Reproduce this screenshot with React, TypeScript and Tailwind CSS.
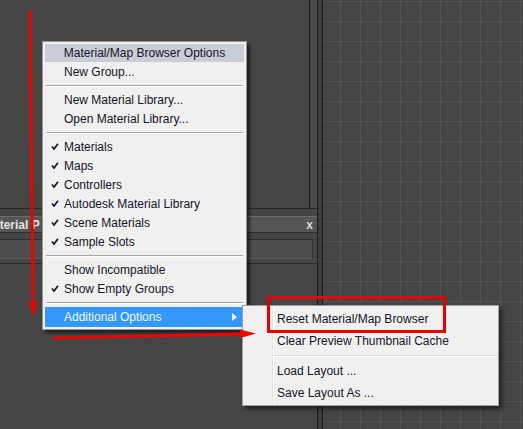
import React from 'react';

type Item = { label: string; checked?: boolean };

const groups: Item[][] = [
    [{ label: 'New Group...' }],
    [{ label: 'New Material Library...' }, { label: 'Open Material Library...' }],
    [
        { label: 'Materials', checked: true },
        { label: 'Maps', checked: true },
        { label: 'Controllers', checked: true },
        { label: 'Autodesk Material Library', checked: true },
        { label: 'Scene Materials', checked: true },
        { label: 'Sample Slots', checked: true },
    ],
    [{ label: 'Show Incompatible' }, { label: 'Show Empty Groups', checked: true }],
];

function Check() {
    return (
        <svg width="8" height="7" viewBox="0 0 8 7" className="text-[#1a1a30]">
            <path d="M1 3.5 L3 6 L7 0.8" fill="none" stroke="currentColor" strokeWidth={1.8} />
        </svg>
    );
}

function Separator() {
    return (
        <div className="h-[9px] flex items-center px-[1px]">
            <div className="w-full h-[2px] border-t border-[#a6a6a6] border-b border-b-white" />
        </div>
    );
}

function MainMenu() {
    return (
        <div className="absolute left-[42px] top-[41px] w-[205px] bg-[#f0f0f0] border border-[#979797] p-[2px] shadow-[3px_3px_3px_rgba(0,0,0,0.55)] text-[12px] text-[#141428]">
            <div className="h-[18px] bg-[#c9cdd5] flex items-center justify-center">Material/Map Browser Options</div>
            {groups.map((g, gi) => (
                <div key={gi}>
                    {gi > 0 && <Separator />}
                    {g.map((it) => (
                        <div key={it.label} className="h-[19px] flex items-center">
                            <div className="w-[19px] flex items-center justify-center pl-[1px]">{it.checked && <Check />}</div>
                            <span>{it.label}</span>
                        </div>
                    ))}
                </div>
            ))}
            <Separator />
            <div className="h-[20px] bg-[#3399ff] text-[#f4f8ff] flex items-center">
                <div className="w-[19px]" />
                <span className="flex-1">Additional Options</span>
                <svg width="5" height="8" viewBox="0 0 5 8" className="mr-[7px]">
                    <path d="M0 0 L5 4 L0 8 Z" fill="white" />
                </svg>
            </div>
        </div>
    );
}

function SubMenu() {
    const row = 'h-[22px] flex items-center pl-[34px]';
    return (
        <div className="absolute left-[242px] top-[305px] w-[257px] h-[101px] bg-[#f0f0f0] border border-[#a0a0a0] pt-[2px] shadow-[3px_3px_4px_rgba(0,0,0,0.55)] text-[12px] text-[#141428]">
            {/* gutter line */}
            <div className="absolute left-[29px] top-[2px] bottom-[2px] w-[2px] border-l border-[#e2e2e2] border-r border-r-white" />
            <div className="relative">
                <div className={row}>Reset Material/Map Browser</div>
                <div className={row}>Clear Preview Thumbnail Cache</div>
                <div className="h-[8px] flex items-center pl-[29px] pr-[1px]">
                    <div className="w-full h-[2px] border-t border-[#dedede] border-b border-b-white" />
                </div>
                <div className={row}>Load Layout ...</div>
                <div className={row}>Save Layout As ...</div>
            </div>
        </div>
    );
}

function Annotations() {
    return (
        <svg className="absolute inset-0 pointer-events-none" width="523" height="429" viewBox="0 0 523 429">
            <line x1="30" y1="10" x2="33" y2="304" stroke="#f20000" strokeWidth={3} />
            <polygon points="29,302 37,302 33.5,318" fill="#f20000" />
            <line x1="53" y1="338" x2="242" y2="334" stroke="#f20000" strokeWidth={3} />
            <polygon points="240,329.5 240,338 256,333.5" fill="#f20000" />
            <rect x="268.5" y="297.5" width="176" height="34" fill="none" stroke="#ea0000" strokeWidth={3} />
        </svg>
    );
}

export default function App() {
    return (
        <div className="relative w-[523px] h-[429px] overflow-hidden bg-[#454545] flex" style={{ fontFamily: '"Liberation Sans", Arial, sans-serif' }}>
            {/* left column */}
            <div className="w-[318px] flex flex-col border-r border-[#1c1c1c]">
                <div className="h-[209px] flex border-b border-[#262626]">
                    <div className="flex-1" />
                    <div className="w-[8px] border-l border-[#1c1c1c] bg-[#484848]" />
                </div>
                <div className="h-[7px]" />
                <div className="h-[17px] flex items-center bg-[#555555] border-t border-[#6c6c6c] border-b border-b-[#2e2e2e] overflow-hidden">
                    {/* title is hidden behind the menu past x=42 */}
                    <div className="w-[42px] overflow-hidden">
                        <span className="block ml-[-17px] text-[12px] font-bold text-[#e4e4e4] whitespace-nowrap">Material P</span>
                    </div>
                    <div className="flex-1" />
                    <span className="mr-[4px] text-[12px] font-bold text-[#dcdcdc] leading-none">x</span>
                </div>
                <div className="h-[6px]" />
                <div className="h-[20px] mr-[4px] bg-[#4d4d4d] border-t border-[#2a2a2a] border-r border-r-[#2f2f2f] border-b border-b-[#555555]" />
                <div className="h-[4px]" />
                <div className="h-[1px] bg-[#2a2a2a]" />
                <div className="flex-1" />
            </div>
            {/* splitter */}
            <div className="w-[5px] bg-[#3d3d3d] border-r border-[#1c1c1c]" />
            {/* viewport grid */}
            <div className="flex-1 bg-[#454545] bg-[linear-gradient(to_right,#515151_1px,transparent_1px),linear-gradient(to_bottom,#515151_1px,transparent_1px)] bg-[size:20px_20px] bg-[position:17px_1px]" />

            <MainMenu />
            <SubMenu />
            <Annotations />
        </div>
    );
}
